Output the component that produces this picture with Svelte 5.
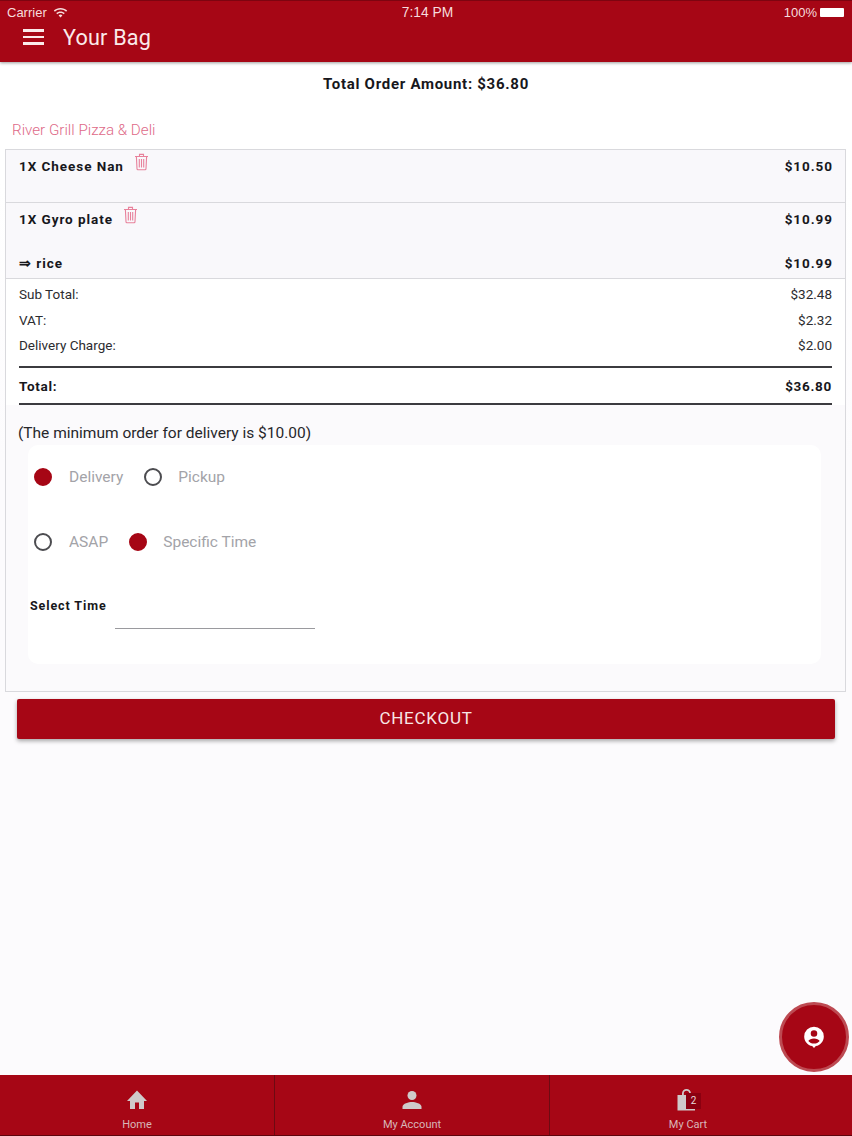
<script lang="ts">
  const items = [
    { name: "1X Cheese Nan", price: "$10.50" },
    { name: "1X Gyro plate", price: "$10.99", option: "rice", optionPrice: "$10.99" }
  ];
  const charges = [
    { label: "Sub Total:", value: "$32.48" },
    { label: "VAT:", value: "$2.32" },
    { label: "Delivery Charge:", value: "$2.00" }
  ];
</script>

<div class="page">
  <header class="header">
    <div class="status">
      <div class="carrier">
        Carrier
        <svg width="15" height="11" viewBox="0 0 15 11" fill="currentColor">
          <path d="M7.5 1C4.9 1 2.6 2 .8 3.6l1.1 1.2C3.4 3.4 5.4 2.6 7.5 2.6s4.1.8 5.6 2.2l1.1-1.2C12.4 2 10.1 1 7.5 1z" />
          <path d="M7.5 4.4c-1.7 0-3.2.6-4.3 1.7l1.1 1.2c.8-.8 2-1.3 3.2-1.3s2.4.5 3.2 1.3l1.1-1.2C10.7 5 9.2 4.4 7.5 4.4z" />
          <path d="M7.5 7.6c-.8 0-1.4.3-1.9.8l1.9 2 1.9-2c-.5-.5-1.1-.8-1.9-.8z" />
        </svg>
      </div>
      <div class="clock">7:14 PM</div>
      <div class="battery">
        100%
        <span class="cell"></span>
      </div>
    </div>
    <div class="toolbar">
      <div class="burger"><span></span><span></span><span></span></div>
      <h1>Your Bag</h1>
    </div>
  </header>

  <main class="content">
    <div class="grand">Total Order Amount: $36.80</div>
    <div class="restaurant">River Grill Pizza &amp; Deli</div>

    <section class="card">
      {#each items as item (item.name)}
        <div class="item">
          <div class="line">
            <div class="name">
              {item.name}
              <svg class="trash" width="15" height="18" viewBox="0 0 15 18" fill="none" stroke="currentColor" stroke-width="1.1">
                <path d="M1 3.5h13M5.5 3.3V1.4h4v1.9M2.4 3.6l.6 12.2c0 .6.5 1 1 1h7c.5 0 1-.4 1-1l.6-12.2M5.3 6v8.6M7.5 6v8.6M9.7 6v8.6" />
              </svg>
            </div>
            <div class="price">{item.price}</div>
          </div>
          {#if item.option}
            <div class="line option">
              <div class="name">⇒ {item.option}</div>
              <div class="price">{item.optionPrice}</div>
            </div>
          {/if}
        </div>
      {/each}

      <div class="summary">
        {#each charges as row (row.label)}
          <div class="charge"><span>{row.label}</span><span>{row.value}</span></div>
        {/each}
        <div class="total"><span>Total:</span><span>$36.80</span></div>
      </div>

      <p class="minimum">(The minimum order for delivery is $10.00)</p>

      <div class="options">
        <div class="radios">
          <span class="radio on"></span><span class="label">Delivery</span>
          <span class="radio"></span><span class="label">Pickup</span>
        </div>
        <div class="radios">
          <span class="radio"></span><span class="label">ASAP</span>
          <span class="radio on"></span><span class="label">Specific Time</span>
        </div>
        <div class="time">
          <span class="time-label">Select Time</span>
          <span class="time-input"></span>
        </div>
      </div>
    </section>

    <button class="checkout">CHECKOUT</button>

    <button class="fab" aria-label="Account">
      <svg width="24" height="24" viewBox="0 0 22 22" fill="#fff">
        <path fill-rule="evenodd" d="M11 1.5a9 9 0 0 1 9 9c0 4.4-3.2 8-7.3 8.800L11 21l-1.700-1.700C5.200 18.500 2 14.900 2 10.500a9 9 0 0 1 9-9zm0 3.200a3 3 0 1 0 0 6 3 3 0 0 0 0-6zm0 7.600c-2.400 0-4.500 1-5.200 2.300 1.200 1.500 3.100 2.400 5.200 2.400s4-.9 5.200-2.400c-.7-1.300-2.800-2.300-5.200-2.300z" />
      </svg>
    </button>
  </main>

  <footer class="tabs">
    <div class="tab">
      <svg width="24" height="24" viewBox="0 0 24 24" fill="currentColor">
        <path d="M10 21v-6.500h4V21h5v-8h3L12 2.500 2 13h3v8z" />
      </svg>
      <span>Home</span>
    </div>
    <div class="tab">
      <svg width="24" height="24" viewBox="0 0 24 24" fill="currentColor">
        <circle cx="12" cy="7.500" r="4.500" />
        <path d="M12 14c-3.300 0-9.500 1.600-9.500 4.800V21h19v-2.200C21.500 15.600 15.300 14 12 14z" />
      </svg>
      <span>My Account</span>
    </div>
    <div class="tab">
      <div class="bag">
        <svg width="24" height="24" viewBox="0 0 24 24" fill="currentColor">
          <path fill-rule="evenodd" d="M6 7V5.500a4.500 4.500 0 0 1 9 0V7h4v15.500H1.500V7zm1.800 0h5.400V5.500a2.700 2.700 0 0 0-5.400 0z" />
        </svg>
        <span class="badge">2</span>
      </div>
      <span>My Cart</span>
    </div>
  </footer>
</div>

<style>
  :global(body) {
    margin: 0;
    font-family: Roboto, "Liberation Sans", sans-serif;
  }

  .page {
    position: relative;
    width: 852px;
    height: 1136px;
    display: flex;
    flex-direction: column;
    background: #fcfbfd;
    overflow: hidden;
  }

  .header {
    height: 62px;
    flex: none;
    box-sizing: border-box;
    background: #a60615;
    color: #fff;
    border-top: 1px solid #7d0410;
    box-shadow: 0 1px 3px rgba(0, 0, 0, 0.4);
    z-index: 2;
  }

  .status {
    height: 23px;
    padding: 0 7px;
    display: grid;
    grid-template-columns: 1fr auto 1fr;
    align-items: center;
    font-family: "Liberation Sans", sans-serif;
    font-size: 13px;
    color: #f6dcdc;
  }

  .carrier {
    display: flex;
    align-items: center;
    gap: 6px;
  }

  .clock {
    font-size: 13.800px;
    padding-left: 3px;
  }

  .battery {
    display: flex;
    justify-content: flex-end;
    align-items: center;
    gap: 3px;
  }

  .cell {
    width: 24px;
    height: 9px;
    background: #fff;
    border-radius: 1px;
    margin-right: 1px;
  }

  .toolbar {
    display: flex;
    align-items: center;
    padding-left: 23px;
    height: 26px;
    gap: 19px;
  }

  .burger {
    width: 21px;
    display: flex;
    flex-direction: column;
    gap: 4px;
  }

  .burger span {
    height: 2.500px;
    background: #fbeaea;
  }

  h1 {
    margin: 0;
    font-size: 21.600px;
    font-weight: 400;
    color: #fbeaea;
    letter-spacing: 0.2px;
  }

  .content {
    position: relative;
    flex: 1;
    display: flex;
    flex-direction: column;
    background: linear-gradient(#fff, #fff 120px, #fcfbfd 400px);
  }

  .grand {
    margin-top: 13px;
    height: 18px;
    line-height: 18px;
    text-align: center;
    font-size: 15px;
    font-weight: 700;
    letter-spacing: 0.72px;
    color: #17171c;
  }

  .restaurant {
    margin: 28px 0 0 12px;
    height: 18px;
    line-height: 18px;
    font-size: 15.200px;
    font-weight: 300;
    color: #de6a88;
  }

  .card {
    margin: 10px 6px 0 5px;
    border: 1px solid #d9d9dd;
    box-sizing: border-box;
    height: 543px;
    background: #fbfafc;
  }

  .item {
    padding: 0 12px 0 13px;
    border-bottom: 1px solid #d9d9dd;
    background: #f9f8fb;
  }

  .line {
    display: flex;
    justify-content: space-between;
    height: 52px;
    box-sizing: border-box;
    padding-top: 7px;
    font-size: 13.500px;
    font-weight: 700;
    letter-spacing: 0.95px;
    color: #17171c;
  }

  .line.option {
    height: 33px;
    padding-top: 9px;
    margin-top: -1px;
  }

  .item:nth-child(2) .line:first-child {
    height: 43px;
  }

  .name {
    display: flex;
    align-items: flex-start;
    gap: 9px;
    line-height: 18px;
  }

  .price {
    line-height: 18px;
  }

  .trash {
    margin-top: -4px;
    margin-left: 1px;
    color: #e8819b;
  }

  .summary {
    padding: 3px 13px 0;
    background: #fff;
  }

  .charge {
    display: flex;
    justify-content: space-between;
    height: 25.500px;
    line-height: 25.500px;
    font-size: 13.500px;
    color: #2c2c30;
  }

  .total {
    display: flex;
    justify-content: space-between;
    margin-top: 7px;
    height: 35px;
    line-height: 37px;
    border-top: 2px solid #3b3b3f;
    border-bottom: 2px solid #3b3b3f;
    font-size: 13.500px;
    font-weight: 700;
    letter-spacing: 0.7px;
    color: #17171c;
  }

  .minimum {
    margin: 18px 0 0 12px;
    height: 20px;
    line-height: 20px;
    font-size: 15.500px;
    color: #27272b;
  }

  .options {
    margin: 2px 24px 0 22px;
    height: 219px;
    box-sizing: border-box;
    padding: 0 2px;
    background: #fff;
    border-radius: 10px;
  }

  .radios {
    display: flex;
    align-items: center;
    height: 65px;
    padding-left: 4px;
  }

  .radio {
    width: 18px;
    height: 18px;
    box-sizing: border-box;
    border: 2.500px solid #4c4c50;
    border-radius: 50%;
  }

  .radio.on {
    background: #a60615;
    border-color: #a60615;
  }

  .label {
    margin: 0 21px 0 17px;
    font-size: 15.500px;
    color: #a3a3a8;
  }

  .radios .radio:nth-of-type(3) + .label {
    margin-left: 16px;
  }

  .time {
    position: relative;
    padding-top: 20px;
    height: 40px;
  }

  .time-label {
    font-size: 12.500px;
    font-weight: 700;
    letter-spacing: 0.9px;
    color: #17171c;
  }

  .time-input {
    position: absolute;
    left: 85px;
    top: 53px;
    width: 200px;
    border-bottom: 1px solid #9a9a9e;
  }

  .checkout {
    margin: 7px 17px 0;
    height: 40px;
    padding: 0 0 2px;
    flex: none;
    border: none;
    border-radius: 2px;
    background: #a60615;
    color: #f8e6e6;
    font-family: inherit;
    font-size: 17px;
    letter-spacing: 0.75px;
    box-shadow: 0 2px 4px rgba(0, 0, 0, 0.35);
  }

  .fab {
    position: absolute;
    right: 3px;
    bottom: 3px;
    width: 70px;
    height: 70px;
    padding: 0;
    display: flex;
    align-items: center;
    justify-content: center;
    box-sizing: border-box;
    background: #a60615;
    border: 3px solid #bd4a52;
    border-radius: 50%;
  }

  .tabs {
    height: 61px;
    flex: none;
    display: grid;
    grid-template-columns: 275px 275px 276px 1fr;
    background: #a60615;
    border-bottom: 1px solid #5e040c;
    box-sizing: border-box;
  }

  .tab {
    display: flex;
    flex-direction: column;
    align-items: center;
    padding-top: 13px;
    border-right: 1px solid #6d0a12;
    font-size: 11px;
    color: #d8b6b8;
  }

  .tab:nth-child(3) {
    border-right: none;
  }

  .tab svg {
    color: #cfcaca;
    display: block;
  }

  .tab > span {
    margin-top: 6px;
  }

  .bag {
    position: relative;
  }

  .badge {
    position: absolute;
    left: 10px;
    top: 5px;
    width: 15px;
    height: 16px;
    background: #8b0010;
    color: #e8dcdc;
    font-size: 10px;
    line-height: 16px;
    text-align: center;
  }
</style>
